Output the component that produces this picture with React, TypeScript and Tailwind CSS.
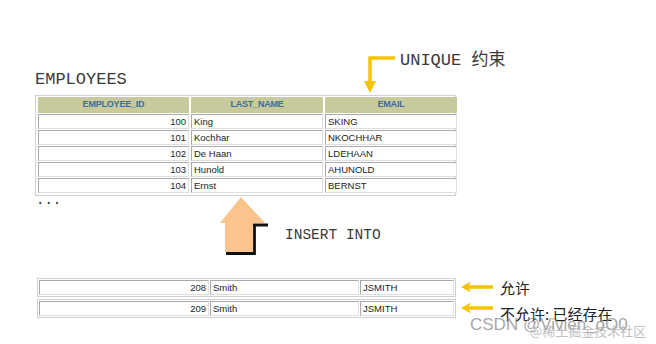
const employees = [
  { id: 100, name: 'King', email: 'SKING' },
  { id: 101, name: 'Kochhar', email: 'NKOCHHAR' },
  { id: 102, name: 'De Haan', email: 'LDEHAAN' },
  { id: 103, name: 'Hunold', email: 'AHUNOLD' },
  { id: 104, name: 'Ernst', email: 'BERNST' },
];

const inserts = [
  { id: 208, name: 'Smith', email: 'JSMITH', note: '允许', offset: 'mt-[1px]' },
  { id: 209, name: 'Smith', email: 'JSMITH', note: '不允许: 已经存在', offset: 'mt-[6px]' },
];

const mono = "font-['Liberation_Mono','Noto_Sans_CJK_SC',monospace]";
const cell =
  'h-[15px] flex items-center px-[2px] bg-white border border-t-[#a9a9a9] border-l-[#a9a9a9] border-b-[#dedede] border-r-[#dedede] text-[9.5px] leading-none text-[#222]';

function LeftArrow() {
  return (
    <svg width="34" height="12" viewBox="0 0 34 12">
      <path d="M1 6 L11 0.5 L9 4.3 L33 4.3 L33 7.7 L9 7.7 L11 11.5 Z" fill="#f7c300" />
    </svg>
  );
}

export default function App() {
  return (
    <div className="w-[656px] h-[344px] bg-white relative overflow-hidden font-['Liberation_Sans',Arial,sans-serif]">
      {/* UNIQUE 标注 */}
      <div className="pt-[48px] pl-[400px] h-[70px] relative">
        <span className={`${mono} text-[17px] leading-[20px] text-[#3a3a3a]`}>UNIQUE 约束</span>
        <svg className="absolute left-[362px] top-[55px]" width="36" height="40" viewBox="0 0 36 40">
          <path d="M33 3 L8 3 L8 30" stroke="#f7c300" strokeWidth="3.5" fill="none" />
          <path d="M2 26 L14 26 L8 38 Z" fill="#f7c300" />
        </svg>
      </div>

      <div className={`${mono} pl-[35px] text-[17px] leading-[22px] text-[#3a3a3a] -mt-[1px]`}>EMPLOYEES</div>

      {/* 表格 */}
      <div className="ml-[35px] mt-[4px] w-[421px] border border-[#d0d0d0] px-[2px] pt-[1px] pb-[2px] flex flex-col gap-[1px]">
        <div className="grid grid-cols-[151px_132px_132px] gap-[2px]">
          {['EMPLOYEE_ID', 'LAST_NAME', 'EMAIL'].map(h => (
            <div
              key={h}
              className="h-[16px] bg-[#c9ca9c] flex items-center justify-center text-[9px] font-bold text-[#3a6ca0] tracking-[-0.2px]"
            >
              {h}
            </div>
          ))}
        </div>
        {employees.map(e => (
          <div key={e.id} className="grid grid-cols-[151px_132px_132px] gap-[2px]">
            <div className={`${cell} justify-end`}>{e.id}</div>
            <div className={cell}>{e.name}</div>
            <div className={cell}>{e.email}</div>
          </div>
        ))}
      </div>

      <div className={`${mono} pl-[36px] text-[14px] leading-[10px] text-[#333] -mt-[1px]`}>...</div>

      {/* INSERT INTO */}
      <div className="flex items-start pl-[218px] mt-[-9px] h-[60px]">
        <svg width="52" height="60" viewBox="0 0 52 60">
          <path d="M35 29 L50 29 M36.5 28 L36.5 57.5 L8 57.5" stroke="#111" strokeWidth="2.8" fill="none" />
          <path d="M23 1 L2 27 L7 27 L7 56 L35 56 L35 27 L47 27 Z" fill="#fbc48d" />
        </svg>
        <span className={`${mono} ml-[15px] mt-[29px] text-[14.5px] leading-[20px] text-[#3a3a3a]`}>INSERT INTO</span>
      </div>

      {/* 插入的行 */}
      <div className="mt-[22px] flex flex-col gap-[2px]">
        {inserts.map(r => (
          <div key={r.id} className="flex items-start h-[19px]">
            <div className="ml-[37px] w-[419px] border border-[#d0d0d0] p-[1px] grid grid-cols-[170px_149px_94px] gap-[1px]">
              <div className={`${cell} justify-end`}>{r.id}</div>
              <div className={cell}>{r.name}</div>
              <div className={cell}>{r.email}</div>
            </div>
            <div className="ml-[4px] mt-[3px]">
              <LeftArrow />
            </div>
            <span className={`ml-[6px] ${r.offset} text-[15px] leading-[18px] text-[#222] font-['Noto_Sans_CJK_SC',sans-serif]`}>
              {r.note}
            </span>
          </div>
        ))}
      </div>

      {/* 水印 */}
      <div className="absolute left-[470px] top-[315px] text-[17px] leading-[20px] text-[#8a8a8a] opacity-75">
        CSDN @Vivien_oO0
      </div>
      <div className="absolute left-[530px] top-[323px] text-[13px] leading-[16px] text-[#b0b0b0] font-['Noto_Sans_CJK_SC',sans-serif] opacity-80">
        @稀土掘金技术社区
      </div>
    </div>
  );
}
